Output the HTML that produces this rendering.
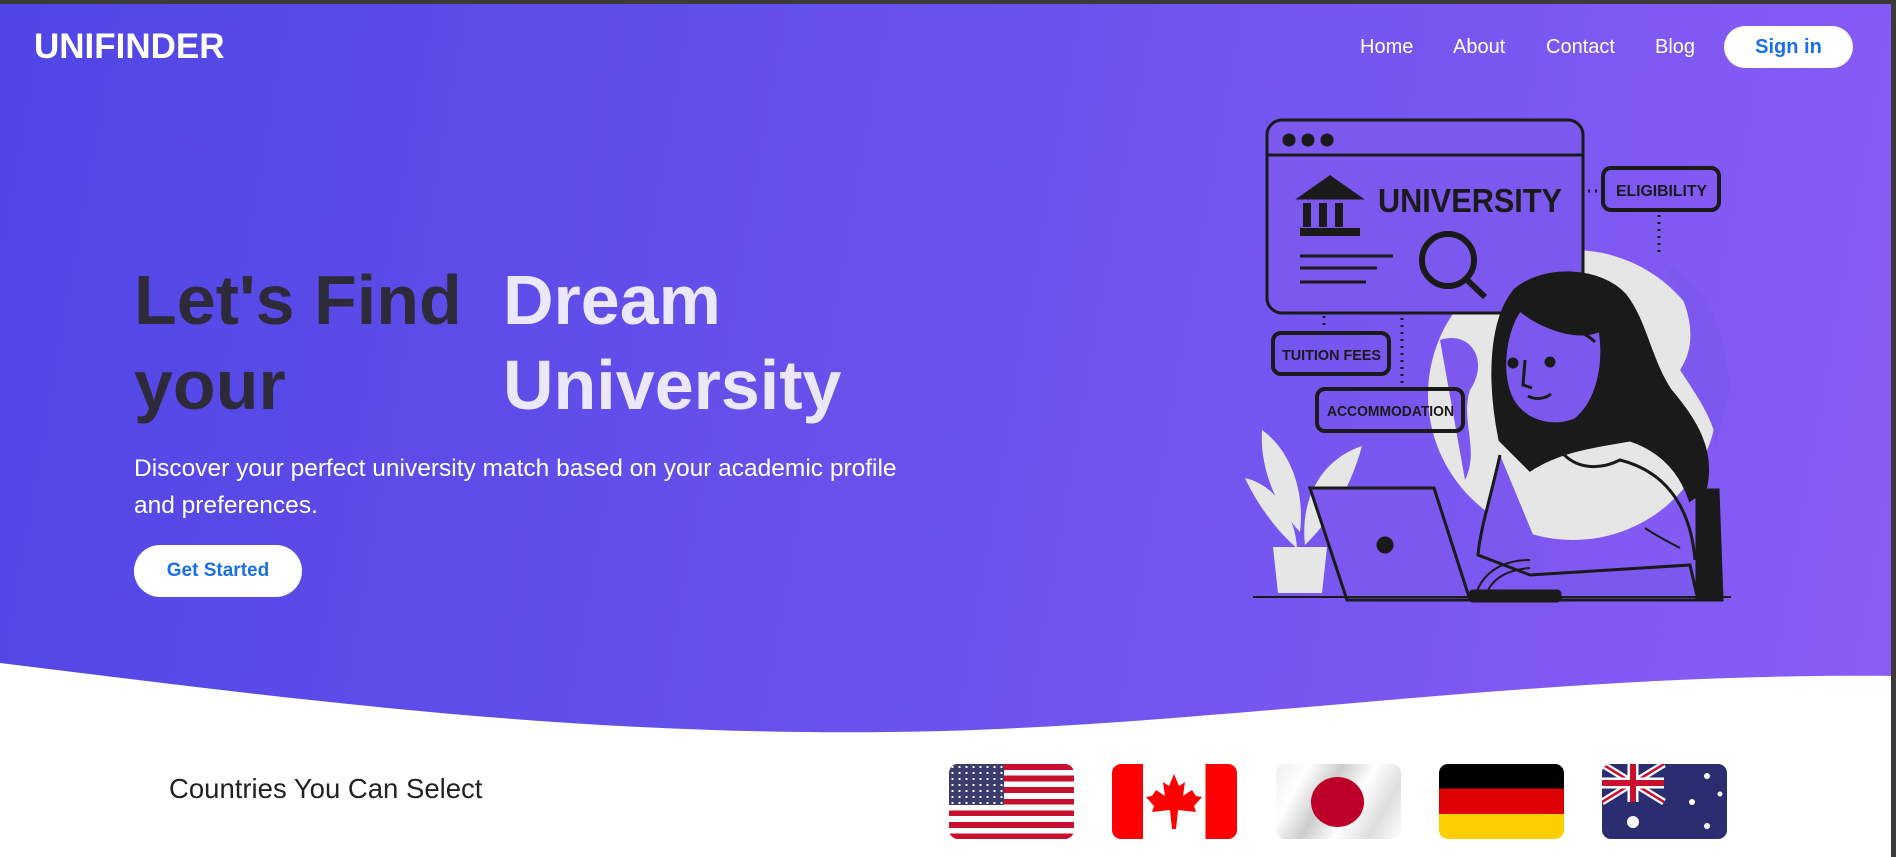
<!DOCTYPE html>
<html><head><meta charset="utf-8"><style>
*{margin:0;padding:0;box-sizing:border-box}
body{width:1896px;height:857px;overflow:hidden;background:#fff;font-family:"Liberation Sans",Arial,sans-serif;position:relative}
.hero{position:absolute;left:0;top:0;width:1896px;height:760px;background:linear-gradient(100deg,#4f46e5 0%,#6a52ec 50%,#8b5cf6 100%)}
.topbar{position:absolute;left:0;top:0;width:1896px;height:4px;background:#3a3a3a}
.scroll{position:absolute;right:0;top:0;width:5px;height:857px;background:#3a3a3a}
.logo{position:absolute;left:34px;top:27px;color:#fff;font-weight:bold;font-size:35px}
.nav a{position:absolute;top:36px;color:#fff;font-size:20px;text-decoration:none}
.signin{position:absolute;left:1724px;top:26px;width:129px;height:42px;border-radius:21px;background:#fff;color:#1a6fe8;font-weight:bold;font-size:20px;text-align:center;line-height:42px}
.h1{position:absolute;top:258px;font-weight:bold;font-size:70px;line-height:85px}
.p{position:absolute;left:134px;top:450px;color:#fff;font-size:24.5px;line-height:37px;width:900px}
.gs{position:absolute;left:134px;top:545px;width:168px;height:52px;border-radius:26px;background:#fff;color:#1a6fe8;font-weight:bold;font-size:19px;text-align:center;line-height:52px}
.ct{position:absolute;left:169px;top:773px;font-size:27.5px;color:#222}
.flag{position:absolute;top:764px;width:125px;height:75px;border-radius:9px;overflow:hidden}
</style></head><body>
<div class="hero"></div>
<svg style="position:absolute;left:0;top:0" width="1896" height="857"><path d="M0,663 C300,700 600,740 943,731 C1250,722 1550,672 1896,676 L1896,857 L0,857 Z" fill="#fff"/></svg>
<div class="topbar"></div><div class="scroll"></div>
<div class="logo">UNIFINDER</div>
<div class="nav"><a style="left:1360px">Home</a><a style="left:1453px">About</a><a style="left:1546px">Contact</a><a style="left:1655px">Blog</a></div>
<div class="signin">Sign in</div>
<div class="h1" style="left:134px;color:#2d2a3a">Let's Find<br>your</div>
<div class="h1" style="left:503px;color:#ece8fb">Dream<br>University</div>
<div class="p">Discover your perfect university match based on your academic profile<br>and preferences.</div>
<div class="gs">Get Started</div>

<svg style="position:absolute;left:0;top:0" width="1896" height="760">
<g stroke="#1a1a1a" stroke-width="3" fill="none">
<circle cx="1573" cy="395" r="145" fill="#e6e6e6" stroke="none"/>
<path d="M1440,340 C1470,330 1490,360 1470,390 C1460,420 1480,450 1465,480 Z" fill="#7c58ef" stroke="none"/>
<path d="M1660,260 C1690,300 1700,340 1680,370 C1700,400 1720,430 1715,450 L1730,390 C1725,320 1700,280 1660,260Z" fill="#7c58ef" stroke="none"/>
<!-- plant -->
<path d="M1300,532 C1270,500 1260,460 1262,430 C1290,450 1305,490 1300,532Z" fill="#e6e6e6" stroke="none"/>
<path d="M1305,545 C1300,500 1320,460 1362,446 C1350,490 1330,520 1305,545Z" fill="#e6e6e6" stroke="none"/>
<path d="M1297,548 C1275,530 1255,500 1245,478 C1275,485 1295,515 1297,548Z" fill="#e6e6e6" stroke="none"/>
<path d="M1273,547 L1327,547 L1322,593 L1278,593Z" fill="#e6e6e6" stroke="none"/>
<!-- browser window -->
<rect x="1267" y="120" width="316" height="193" rx="15" fill="#7c58ef"/>
<line x1="1268" y1="155" x2="1582" y2="155"/>
<circle cx="1289" cy="140" r="5" fill="#1a1a1a"/><circle cx="1308" cy="140" r="5" fill="#1a1a1a"/><circle cx="1327" cy="140" r="5" fill="#1a1a1a"/>
<path d="M1300,198 L1330,177 L1360,198Z" fill="#1a1a1a"/>
<rect x="1303" y="203" width="8" height="24" fill="#1a1a1a" stroke="none"/><rect x="1319" y="203" width="8" height="24" fill="#1a1a1a" stroke="none"/><rect x="1335" y="203" width="8" height="24" fill="#1a1a1a" stroke="none"/>
<rect x="1300" y="228" width="60" height="8" fill="#1a1a1a" stroke="none"/>
<line x1="1300" y1="256" x2="1393" y2="256"/><line x1="1300" y1="268" x2="1377" y2="268"/><line x1="1300" y1="282" x2="1366" y2="282"/>
<circle cx="1448" cy="260" r="26" stroke-width="6"/><line x1="1466" y1="279" x2="1485" y2="297" stroke-width="6"/>
<!-- labels -->
<rect x="1603" y="168" width="116" height="42" rx="8" stroke-width="4"/>
<rect x="1273" y="333" width="116" height="41" rx="8" stroke-width="4"/>
<rect x="1317" y="389" width="146" height="42" rx="8" stroke-width="4"/>
<g stroke-dasharray="2 5" stroke-width="3"><line x1="1588" y1="191" x2="1600" y2="191"/><line x1="1659" y1="215" x2="1659" y2="252"/><line x1="1324" y1="316" x2="1324" y2="330"/><line x1="1402" y1="318" x2="1402" y2="386"/></g>
<!-- hair -->
<path d="M1500,440 C1488,380 1490,320 1515,290 C1545,265 1600,268 1625,295 C1645,320 1650,360 1670,390 C1695,420 1715,450 1705,490 L1690,500 C1680,470 1660,450 1630,440 C1600,445 1560,450 1530,470 Z" fill="#1a1a1a"/>
<path d="M1520,310 C1545,330 1580,340 1600,330 C1605,360 1600,400 1575,420 C1550,430 1520,420 1510,395 C1500,370 1505,330 1520,310Z" fill="#7c58ef"/>
<circle cx="1513" cy="363" r="4" fill="#1a1a1a"/><circle cx="1550" cy="362" r="4" fill="#1a1a1a"/>
<path d="M1528,396 C1535,400 1545,399 1551,394"/>
<path d="M1525,360 L1523,385 L1532,388"/>
<path d="M1560,325 C1575,328 1588,335 1595,342"/>
<!-- body -->
<path d="M1500,455 C1490,500 1480,530 1478,555 L1530,575 L1610,570 L1690,565 L1698,600 L1560,600" fill="#7c58ef"/>
<path d="M1560,450 C1575,470 1600,470 1620,460 C1660,470 1690,500 1695,560"/>
<path d="M1645,528 C1655,535 1665,540 1680,548" stroke-width="2"/>
<path d="M1697,490 L1718,490 L1722,600 L1697,600Z" fill="#1a1a1a"/>
<!-- laptop -->
<path d="M1310,488 L1434,488 L1470,600 L1347,600Z" fill="#7c58ef" stroke-width="3"/>
<circle cx="1385" cy="545" r="7" fill="#1a1a1a"/>
<path d="M1475,598 C1480,575 1500,560 1530,560" stroke-width="2"/>
<path d="M1485,598 C1490,580 1505,570 1530,568" stroke-width="2"/>
<rect x="1470" y="591" width="90" height="10" rx="3" fill="#1a1a1a"/>
<line x1="1253" y1="597" x2="1731" y2="597" stroke-width="2"/>
</g>
<g font-family="Liberation Sans,Arial,sans-serif" font-weight="bold" fill="#1a1a1a">
<text x="1378" y="212" font-size="33" textLength="184" lengthAdjust="spacingAndGlyphs">UNIVERSITY</text>
<text x="1616" y="196" font-size="16" textLength="91" lengthAdjust="spacingAndGlyphs">ELIGIBILITY</text>
<text x="1282" y="360" font-size="15" textLength="99" lengthAdjust="spacingAndGlyphs">TUITION FEES</text>
<text x="1327" y="416" font-size="15" textLength="127" lengthAdjust="spacingAndGlyphs">ACCOMMODATION</text>
</g>
</svg>

<div class="ct">Countries You Can Select</div>
<div class="flag" style="left:949px;background:repeating-linear-gradient(#c8102e 0 5.8px,#fff 5.8px 11.6px)"><div style="width:55px;height:41px;background:#3c3b6e;background-image:radial-gradient(#fff 1px,transparent 1.4px);background-size:7px 6px"></div></div>
<div class="flag" style="left:1112px;background:linear-gradient(90deg,#f00 0 25%,#fff 25% 75%,#f00 75%)"><svg width="125" height="75" style="position:absolute;left:0;top:0"><path d="M62,10 L67,22 L73,18 L71,32 L80,26 L84,32 L90,33 L82,42 L84,48 L66,46 L64,65 L60,65 L58,46 L40,48 L42,42 L34,33 L40,32 L44,26 L53,32 L51,18 L57,22Z" fill="#f00"/></svg></div>
<div class="flag" style="left:1276px;background:linear-gradient(120deg,#eee,#fff,#ccc,#fff,#ddd,#fff)"><div style="position:absolute;left:35px;top:13px;width:53px;height:50px;border-radius:50%;background:#bc0029"></div></div>
<div class="flag" style="left:1439px;background:linear-gradient(#000 0 33%,#dd0000 33% 67%,#ffce00 67%)"></div>
<div class="flag" style="left:1602px;background:#2b2d70"><svg width="125" height="75" style="position:absolute;left:0;top:0"><rect width="62" height="38" fill="#2b2d70"/><path d="M0,0 L62,38 M62,0 L0,38" stroke="#fff" stroke-width="7"/><path d="M0,0 L62,38 M62,0 L0,38" stroke="#c8102e" stroke-width="2.5"/><path d="M31,0 V38 M0,19 H62" stroke="#fff" stroke-width="11"/><path d="M31,0 V38 M0,19 H62" stroke="#c8102e" stroke-width="6"/><g fill="#fff"><circle cx="31" cy="58" r="6"/><circle cx="105" cy="12" r="3"/><circle cx="90" cy="38" r="3"/><circle cx="105" cy="62" r="3"/><circle cx="118" cy="30" r="2.5"/></g></svg></div>
</body></html>
